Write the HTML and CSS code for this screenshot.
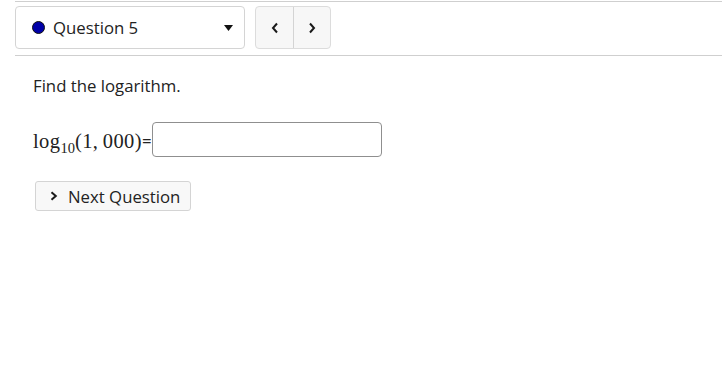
FILE: index.html
```html
<!DOCTYPE html>
<html lang="en">
<head>
    <meta charset="UTF-8">
    <meta name="viewport" content="width=device-width, initial-scale=1.0">
    <title>Question 5</title>
    <link rel="stylesheet" href="styles.css">
</head>
<body>
    <div id="header">
        <div class="q-select">
            <span class="q-dot"></span>
            <span class="q-label">Question 5</span>
            <svg class="q-caret" width="9" height="6" viewBox="0 0 9 6"><polygon points="0,0 9,0 4.5,6" fill="#111"/></svg>
        </div>
        <div class="nav-group">
            <button class="nav-btn">
                <svg width="8" height="12" viewBox="0 0 8 12"><polyline points="6,1.5 2,6 6,10.5" fill="none" stroke="#1a1a1a" stroke-width="2"/></svg>
            </button>
            <button class="nav-btn">
                <svg width="8" height="12" viewBox="0 0 8 12"><polyline points="2,1.5 6,6 2,10.5" fill="none" stroke="#1a1a1a" stroke-width="2"/></svg>
            </button>
        </div>
    </div>

    <div id="content">
        <p class="prompt">Find the logarithm.</p>
        <div class="answer-row">
            <span class="math">log<sub>10</sub>(1,&thinsp;000)</span><span class="eq">=</span><input class="answer" type="text">
        </div>
        <button class="next-btn">
            <svg width="8" height="10" viewBox="0 0 8 10"><polyline points="1.5,1.2 5.8,5 1.5,8.8" fill="none" stroke="#1a1a1a" stroke-width="2"/></svg>
            Next Question
        </button>
    </div>
</body>
</html>
```

FILE: styles.css
```css
* {
    margin: 0;
    padding: 0;
    box-sizing: border-box;
}

body {
    font-family: 'Open Sans', sans-serif;
    font-size: 16.75px;
    color: #222;
    background: white;
}

#header {
    margin: 1px 0 0 15px;
    padding: 4px 0 6px;
    border-top: 1px solid #cfcfcf;
    border-bottom: 1px solid #cfcfcf;
    display: flex;
    align-items: center;
}

.q-select {
    width: 230px;
    height: 43px;
    border: 1px solid #d4d4d4;
    border-radius: 4px;
    display: flex;
    align-items: center;
    padding: 0 11px 0 16px;
}

.q-dot {
    width: 13px;
    height: 13px;
    border-radius: 50%;
    background: #0000a8;
    border: 1px solid #111;
}

.q-label {
    margin-left: 8px;
    flex: 1;
}

.nav-group {
    margin-left: 10px;
    display: flex;
    height: 43px;
    border: 1px solid #dcdcdc;
    border-radius: 4px;
    background: #f7f7f7;
    overflow: hidden;
}

.nav-btn {
    width: 37px;
    border: none;
    background: transparent;
    display: flex;
    align-items: center;
    justify-content: center;
}

.nav-btn + .nav-btn {
    border-left: 1px solid #d4d4d4;
}

#content {
    padding: 19px 0 0 33px;
}

.prompt {
    line-height: 22px;
}

.answer-row {
    margin-top: 25px;
    display: flex;
    align-items: center;
}

.math {
    font-family: 'Liberation Serif', serif;
    font-size: 20.5px;
    letter-spacing: 0.4px;
    margin-top: 3px;
}

.math sub {
    font-size: 14.5px;
    vertical-align: -5px;
    line-height: 0;
    letter-spacing: 0;
}

.eq {
    margin-top: 2px;
}

.answer {
    width: 230px;
    height: 35px;
    border: 1px solid #8f8f8f;
    border-radius: 4px;
    font: inherit;
    padding: 0 8px;
}

.next-btn {
    margin: 24px 0 0 2px;
    height: 30px;
    padding: 0 10px 0 14px;
    font-family: 'Open Sans', sans-serif;
    font-size: 16.75px;
    color: #222;
    background: #f8f8f8;
    border: 1px solid #d4d4d4;
    border-radius: 3px;
    display: flex;
    align-items: center;
    gap: 10px;
}
```
